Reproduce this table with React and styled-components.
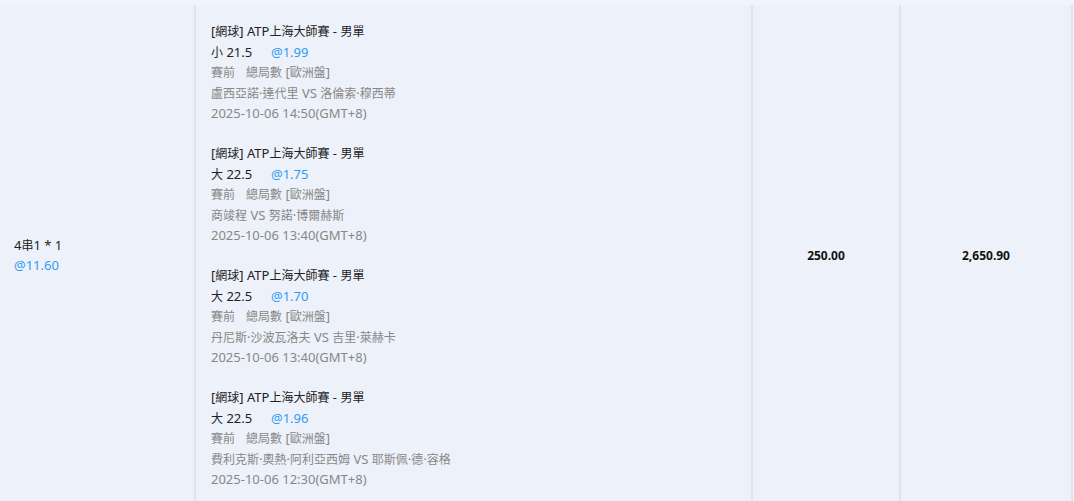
import React from 'react';
import styled, { createGlobalStyle } from 'styled-components';

const GlobalStyle = createGlobalStyle`
  body {
    margin: 0;
    background: #eef5fd;
    font-family: "Noto Sans", "Noto Sans CJK TC", sans-serif;
    font-size: 13px;
  }
`;

const bets = [
  { pick: '小 21.5', odds: '@1.99', teams: '盧西亞諾·達代里 VS 洛倫索·穆西蒂', time: '2025-10-06 14:50(GMT+8)' },
  { pick: '大 22.5', odds: '@1.75', teams: '商竣程 VS 努諾·博爾赫斯', time: '2025-10-06 13:40(GMT+8)' },
  { pick: '大 22.5', odds: '@1.70', teams: '丹尼斯·沙波瓦洛夫 VS 吉里·萊赫卡', time: '2025-10-06 13:40(GMT+8)' },
  { pick: '大 22.5', odds: '@1.96', teams: '費利克斯·奧熱·阿利亞西姆 VS 耶斯佩·德·容格', time: '2025-10-06 12:30(GMT+8)' },
];

// chinese runs are set a pixel smaller than the latin text, as on the site
const hanRun = /([\u3000-\u9fff\uff00-\uffef]+)/;
const Mixed = ({ text }) =>
  text.split(hanRun).map((part, i) =>
    hanRun.test(part) ? <Han key={i}>{part}</Han> : part
  );

const App = () => {
  return (
    <>
      <GlobalStyle />
      <Page>
        <Row>
          <Cell width="194px" align="left">
            <Combo>
              <div><Mixed text="4串1 * 1" /></div>
              <Odds>@11.60</Odds>
            </Combo>
          </Cell>
          <Cell width="555px" align="left">
            <Details>
              {bets.map((bet, i) => (
                <Bet key={i}>
                  <Line><Mixed text="[網球] ATP上海大師賽 - 男單" /></Line>
                  <Line>
                    <Pick><Mixed text={bet.pick} /></Pick>
                    <Odds>{bet.odds}</Odds>
                  </Line>
                  <Line grey>
                    <Han>賽前</Han><Market>總局數</Market> [<Han>歐洲盤</Han>]
                  </Line>
                  <Line grey><Mixed text={bet.teams} /></Line>
                  <Line grey>{bet.time}</Line>
                </Bet>
              ))}
            </Details>
          </Cell>
          <Cell width="146px">
            <Amount>250.00</Amount>
          </Cell>
          <Cell width="170px">
            <Amount>2,650.90</Amount>
          </Cell>
        </Row>
      </Page>
    </>
  );
};

const Page = styled.div`
  padding-top: 5px;
  width: 1073px;
`;

const Row = styled.div`
  display: flex;
  background: #edf1f9;
  color: #222;
`;

const Cell = styled.div`
  width: ${(p) => p.width};
  flex-shrink: 0;
  border-right: 2px solid #dde4f0;
  display: flex;
  align-items: center;
  justify-content: ${(p) => (p.align === 'left' ? 'flex-start' : 'center')};
`;

const Combo = styled.div`
  padding-left: 14px;
  line-height: 20px;
`;

const Details = styled.div`
  padding: 16px 15px;
`;

const Bet = styled.div`
  & + & {
    margin-top: 19.5px;
  }
`;

const Line = styled.div`
  line-height: 20.5px;
  color: ${(p) => (p.grey ? '#888' : '#222')};
  white-space: nowrap;
`;

const Han = styled.span`
  font-size: 12px;
  line-height: 1;
`;

const Pick = styled.span`
  display: inline-block;
  width: 60px;
`;

const Odds = styled.span`
  color: #2d9cf4;
`;

const Market = styled(Han)`
  margin-left: 11px;
`;

const Amount = styled.div`
  font-weight: bold;
  font-size: 12px;
  color: #111;
`;

export default App;
